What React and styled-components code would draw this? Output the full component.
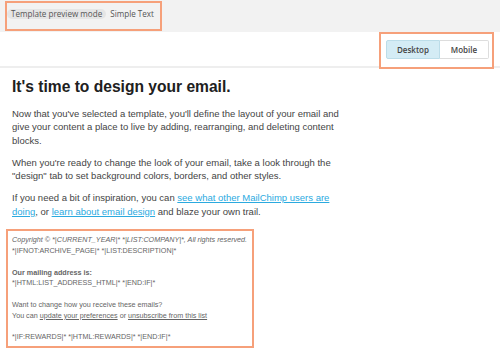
import React from "react";
import styled, { createGlobalStyle } from "styled-components";

const GlobalStyle = createGlobalStyle`
  html, body { margin: 0; padding: 0; background: #ffffff; }
  body { font-family: "Liberation Sans", Arial, sans-serif; }
`;

const ORANGE = "#f6a07a";

const TopBar = styled.div`
  height: 32px;
  box-sizing: border-box;
  background: #f2f2f2;
  padding: 1px 0 1px 5px;
  display: flex;
`;

const HeaderGroup = styled.div`
  height: 30px;
  box-sizing: border-box;
  border: 2px solid ${ORANGE};
  display: flex;
  align-items: flex-start;
  gap: 4px;
  padding: 6px 6px 0 0;
  font-family: "Open Sans", sans-serif;
  font-size: 8.1px;
  line-height: 10px;
  color: #555555;
`;

const Pill = styled.span`
  background: #e5e5e5;
  border-radius: 5px;
  padding: 0 4px;
  height: 10px;
`;

const Toolbar = styled.div`
  height: 34px;
  border-bottom: 2px solid #eeeeee;
  display: flex;
  justify-content: flex-end;
  align-items: flex-start;
  padding-right: 6px;
`;

const ToggleBox = styled.div`
  position: relative;
  z-index: 1;
  height: 37px;
  box-sizing: border-box;
  border: 2px solid ${ORANGE};
  background: #ffffff;
  padding: 6px 3px 0 5px;
  display: flex;
  align-items: flex-start;
`;

const ToggleButton = styled.div`
  height: 19px;
  box-sizing: border-box;
  width: ${(p) => p.$w}px;
  display: flex;
  align-items: center;
  justify-content: center;
  font-family: "Open Sans", sans-serif;
  font-size: 8px;
  font-weight: 600;
  color: #444444;
  background: ${(p) => (p.$active ? "#d4ecf5" : "#ffffff")};
  border: 1px solid ${(p) => (p.$active ? "#bcdde9" : "#dddddd")};
  border-radius: ${(p) => (p.$first ? "2px 0 0 2px" : "0 2px 2px 0")};
  ${(p) => (p.$first ? "" : "border-left: none;")}
`;

const Content = styled.div`
  padding: 10px 0 0 12px;
`;

const Heading = styled.h1`
  margin: 0 0 10px 0;
  font-size: 15.6px;
  line-height: 18.7px;
  font-weight: 700;
  color: #202020;
`;

const Para = styled.p`
  margin: 0 0 8.5px 0;
  width: 337px;
  font-size: 9.5px;
  line-height: 13.5px;
  color: #444444;
`;

const Link = styled.a`
  color: #2baadf;
  text-decoration: underline;
`;

const Footer = styled.div`
  margin: 11px 0 0 -6px;
  width: 248px;
  box-sizing: border-box;
  border: 2px solid ${ORANGE};
  padding: 4px 0 3px 4px;
  font-size: 7.2px;
  line-height: 10.8px;
  color: #656565;
  white-space: nowrap;
`;

const FooterLink = styled.a`
  color: #656565;
  text-decoration: underline;
`;

export default function App() {
  return (
    <>
      <GlobalStyle />
      <TopBar>
        <HeaderGroup>
          <Pill>Template preview mode</Pill>
          <span>Simple Text</span>
        </HeaderGroup>
      </TopBar>
      <Toolbar>
        <ToggleBox>
          <ToggleButton $active $first $w={54}>Desktop</ToggleButton>
          <ToggleButton $w={49}>Mobile</ToggleButton>
        </ToggleBox>
      </Toolbar>
      <Content>
        <Heading>It's time to design your email.</Heading>
        <Para>
          Now that you've selected a template, you'll define the layout of your email and
          give your content a place to live by adding, rearranging, and deleting content
          blocks.
        </Para>
        <Para>
          When you're ready to change the look of your email, take a look through the
          "design" tab to set background colors, borders, and other styles.
        </Para>
        <Para>
          If you need a bit of inspiration, you can{" "}
          <Link href="#">see what other MailChimp users are doing</Link>, or{" "}
          <Link href="#">learn about email design</Link> and blaze your own trail.
        </Para>
        <Footer>
          <em>Copyright © *|CURRENT_YEAR|* *|LIST:COMPANY|*, All rights reserved.</em>
          <br />
          *|IFNOT:ARCHIVE_PAGE|* *|LIST:DESCRIPTION|*
          <br />
          <br />
          <strong>Our mailing address is:</strong>
          <br />
          *|HTML:LIST_ADDRESS_HTML|* *|END:IF|*
          <br />
          <br />
          Want to change how you receive these emails?
          <br />
          You can <FooterLink href="#">update your preferences</FooterLink> or{" "}
          <FooterLink href="#">unsubscribe from this list</FooterLink>
          <br />
          <br />
          *|IF:REWARDS|* *|HTML:REWARDS|* *|END:IF|*
        </Footer>
      </Content>
    </>
  );
}
